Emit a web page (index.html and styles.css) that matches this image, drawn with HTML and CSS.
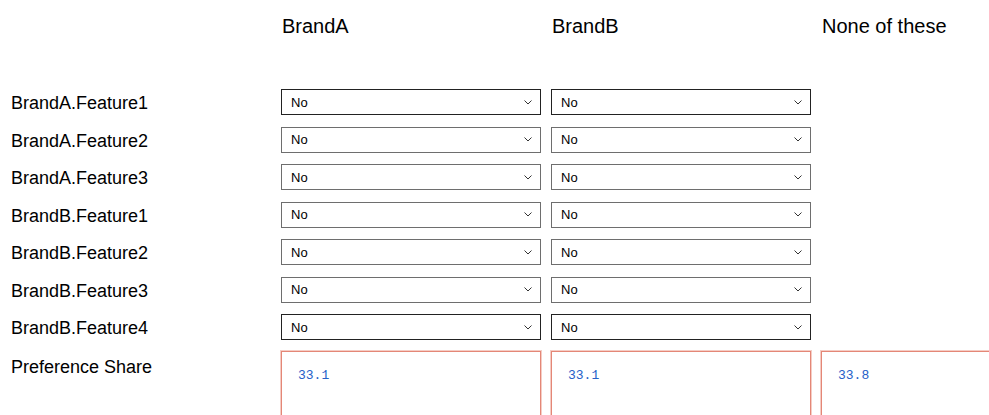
FILE: index.html
```html
<!DOCTYPE html>
<html>
<head>
<meta charset="utf-8">
<link rel="stylesheet" href="styles.css">
</head>
<body>
<div class="matrix">
  <div class="head"></div>
  <div class="head">BrandA</div>
  <div class="head">BrandB</div>
  <div class="head">None of these</div>

  <div class="label">BrandA.Feature1</div>
  <div class="sel dark"><span>No</span><svg class="chev" width="8" height="5" viewBox="0 0 8 5"><path d="M0.5 0.5 L4 4 L7.5 0.5" fill="none" stroke="#333" stroke-width="1"/></svg></div>
  <div class="sel dark"><span>No</span><svg class="chev" width="8" height="5" viewBox="0 0 8 5"><path d="M0.5 0.5 L4 4 L7.5 0.5" fill="none" stroke="#333" stroke-width="1"/></svg></div>
  <div></div>

  <div class="label">BrandA.Feature2</div>
  <div class="sel"><span>No</span><svg class="chev" width="8" height="5" viewBox="0 0 8 5"><path d="M0.5 0.5 L4 4 L7.5 0.5" fill="none" stroke="#333" stroke-width="1"/></svg></div>
  <div class="sel"><span>No</span><svg class="chev" width="8" height="5" viewBox="0 0 8 5"><path d="M0.5 0.5 L4 4 L7.5 0.5" fill="none" stroke="#333" stroke-width="1"/></svg></div>
  <div></div>

  <div class="label">BrandA.Feature3</div>
  <div class="sel"><span>No</span><svg class="chev" width="8" height="5" viewBox="0 0 8 5"><path d="M0.5 0.5 L4 4 L7.5 0.5" fill="none" stroke="#333" stroke-width="1"/></svg></div>
  <div class="sel"><span>No</span><svg class="chev" width="8" height="5" viewBox="0 0 8 5"><path d="M0.5 0.5 L4 4 L7.5 0.5" fill="none" stroke="#333" stroke-width="1"/></svg></div>
  <div></div>

  <div class="label">BrandB.Feature1</div>
  <div class="sel"><span>No</span><svg class="chev" width="8" height="5" viewBox="0 0 8 5"><path d="M0.5 0.5 L4 4 L7.5 0.5" fill="none" stroke="#333" stroke-width="1"/></svg></div>
  <div class="sel"><span>No</span><svg class="chev" width="8" height="5" viewBox="0 0 8 5"><path d="M0.5 0.5 L4 4 L7.5 0.5" fill="none" stroke="#333" stroke-width="1"/></svg></div>
  <div></div>

  <div class="label">BrandB.Feature2</div>
  <div class="sel"><span>No</span><svg class="chev" width="8" height="5" viewBox="0 0 8 5"><path d="M0.5 0.5 L4 4 L7.5 0.5" fill="none" stroke="#333" stroke-width="1"/></svg></div>
  <div class="sel"><span>No</span><svg class="chev" width="8" height="5" viewBox="0 0 8 5"><path d="M0.5 0.5 L4 4 L7.5 0.5" fill="none" stroke="#333" stroke-width="1"/></svg></div>
  <div></div>

  <div class="label">BrandB.Feature3</div>
  <div class="sel"><span>No</span><svg class="chev" width="8" height="5" viewBox="0 0 8 5"><path d="M0.5 0.5 L4 4 L7.5 0.5" fill="none" stroke="#333" stroke-width="1"/></svg></div>
  <div class="sel"><span>No</span><svg class="chev" width="8" height="5" viewBox="0 0 8 5"><path d="M0.5 0.5 L4 4 L7.5 0.5" fill="none" stroke="#333" stroke-width="1"/></svg></div>
  <div></div>

  <div class="label">BrandB.Feature4</div>
  <div class="sel dark"><span>No</span><svg class="chev" width="8" height="5" viewBox="0 0 8 5"><path d="M0.5 0.5 L4 4 L7.5 0.5" fill="none" stroke="#333" stroke-width="1"/></svg></div>
  <div class="sel dark"><span>No</span><svg class="chev" width="8" height="5" viewBox="0 0 8 5"><path d="M0.5 0.5 L4 4 L7.5 0.5" fill="none" stroke="#333" stroke-width="1"/></svg></div>
  <div></div>

  <div class="label pref-label">Preference Share</div>
  <div class="pref">33.1</div>
  <div class="pref">33.1</div>
  <div class="pref">33.8</div>
</div>
</body>
</html>
```
FILE: styles.css
```css
html {
  overflow: hidden;
}
html, body {
  margin: 0;
  padding: 0;
  background: #fff;
}
body {
  font-family: "Liberation Sans", Arial, sans-serif;
  color: #000;
}
.matrix {
  display: grid;
  grid-template-columns: 270px 270px 270px 270px;
  grid-template-rows: 63.5px repeat(7, 26px) auto;
  row-gap: 11.5px;
  padding: 14px 0 0 11px;
  width: 1100px;
}
.head {
  font-size: 20px;
  line-height: 23px;
  padding: 1px 0 0 1px;
}
.label {
  font-size: 18px;
  padding-top: 2px;
  height: 26px;
  box-sizing: border-box;
  line-height: 24px;
}
.sel {
  width: 260px;
  height: 26px;
  box-sizing: border-box;
  border: 1px solid #6e6e6e;
  background: #fff;
  display: flex;
  align-items: center;
  justify-content: space-between;
  padding: 0 8px 0 9px;
  font-size: 13px;
}
.sel.dark {
  border-color: #222;
}
.chev {
  display: block;
}
.pref-label {
  padding-top: 5px;
  line-height: 20px;
  height: auto;
}
.pref {
  width: 260px;
  height: 80px;
  margin-top: -1px;
  box-sizing: border-box;
  border: 1px solid #e48777;
  box-shadow: 0 0 0 1px #f5cdc5;
  padding: 16px 0 0 16px;
  font-family: "Liberation Mono", "Courier New", monospace;
  font-size: 13px;
  line-height: 16px;
  color: #2560c8;
}
```
